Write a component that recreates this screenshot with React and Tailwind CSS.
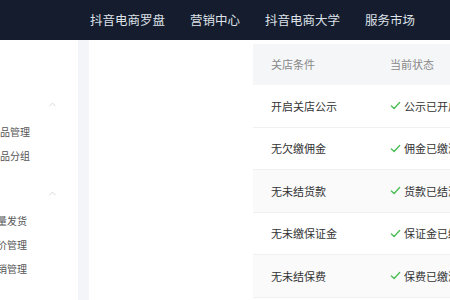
import React from "react";
import { ChevronUp } from "lucide-react";

const navItems = ["抖音电商罗盘", "营销中心", "抖音电商大学", "服务市场"];

const rows = [
  { cond: "开启关店公示", state: "公示已开启", alt: false },
  { cond: "无欠缴佣金", state: "佣金已缴清", alt: false },
  { cond: "无未结货款", state: "货款已结清", alt: true },
  { cond: "无未缴保证金", state: "保证金已缴清", alt: false },
  { cond: "无未结保费", state: "保费已缴清", alt: true },
];

const Check = () => (
  <svg width="11" height="11" viewBox="0 0 12 12" className="shrink-0">
    <path d="M1.5 6.5 L4.5 9.3 L10.5 2.8" fill="none" stroke="#4cbf55" strokeWidth="1.5" strokeLinecap="round" strokeLinejoin="round" />
  </svg>
);

const SideGroup = ({ items }) => (
  <div className="flex flex-col">
    <div className="h-[30px] flex items-center justify-end pr-[20px]">
      <ChevronUp size={11} color="#c4c4c4" strokeWidth={1.5} />
    </div>
    {items.map((t) => (
      <div key={t.text} className="h-[24px] flex items-center whitespace-nowrap text-[10px] text-[#555]">
        <span className={t.shift}>{t.text}</span>
      </div>
    ))}
  </div>
);

export default function App() {
  return (
    <div
      className="w-[450px] h-[300px] overflow-hidden flex flex-col bg-white"
      style={{ fontFamily: '"Noto Sans CJK SC", "Noto Sans", sans-serif' }}
    >
      <header className="h-[40px] shrink-0 bg-[#151c2d] flex items-center pl-[90px] gap-[25px] text-[12.5px] text-[#dde1e8] whitespace-nowrap">
        {navItems.map((n) => (
          <span key={n}>{n}</span>
        ))}
      </header>

      <div className="flex flex-1 min-h-0">
        <aside className="w-[78px] shrink-0 overflow-hidden pt-[49px] flex flex-col gap-[11px]">
          <SideGroup
            items={[
              { text: "商品管理", shift: "-ml-[10px]" },
              { text: "商品分组", shift: "-ml-[10px]" },
            ]}
          />
          <SideGroup
            items={[
              { text: "批量发货", shift: "-ml-[13px]" },
              { text: "改价管理", shift: "-ml-[13px]" },
              { text: "营销管理", shift: "-ml-[13px]" },
            ]}
          />
        </aside>
        <div className="w-[11px] shrink-0 bg-[#f4f5f8]" />

        <main className="flex-1 pl-[164px] pt-[4px] overflow-hidden">
          <div className="w-[260px] text-[11px] text-[#333]">
            <div className="h-[41px] flex items-center bg-[#f5f6f8] text-[#888]">
              <span className="w-[137px] pl-[18px]">关店条件</span>
              <span>当前状态</span>
            </div>
            {rows.map((r) => (
              <div
                key={r.cond}
                className={`h-[42.5px] flex items-center border-b border-[#f0f0f2] whitespace-nowrap ${r.alt ? "bg-[#fafafb]" : "bg-white"}`}
              >
                <span className="w-[137px] pl-[18px]">{r.cond}</span>
                <span className="flex items-center gap-[3px]">
                  <Check />
                  {r.state}
                </span>
              </div>
            ))}
          </div>
        </main>
      </div>
    </div>
  );
}
